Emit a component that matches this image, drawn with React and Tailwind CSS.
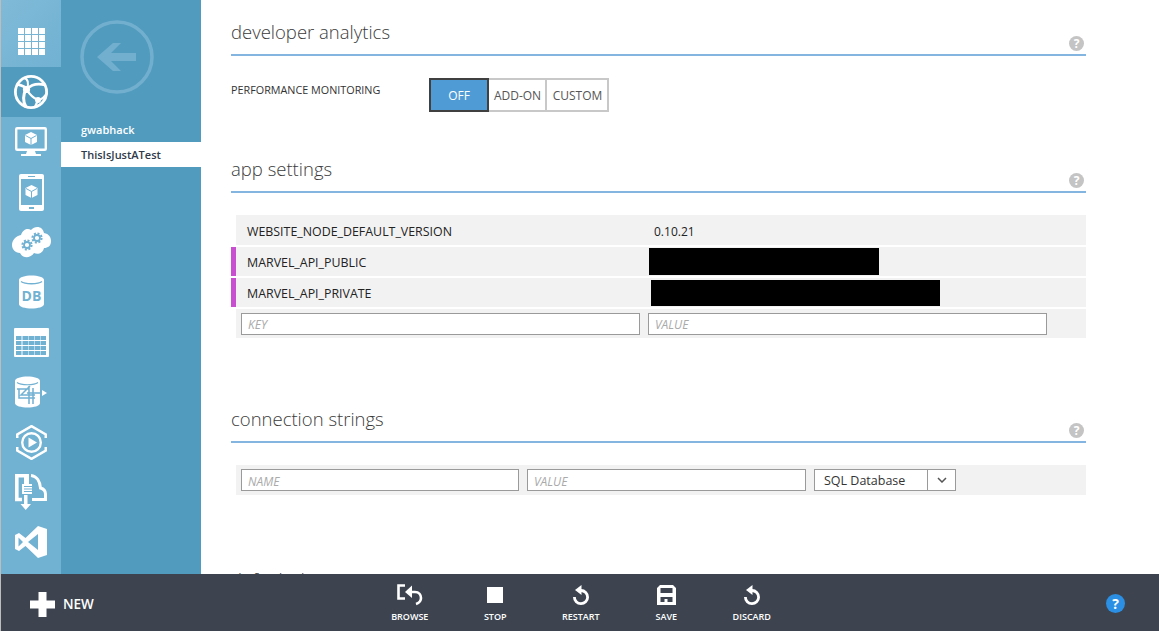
import React from 'react';

const BLUE = '#71b1d2';

const Cube = ({ x, y, s = 1 }) => (
  <g transform={`translate(${x} ${y}) scale(${s})`}>
    <polygon points="6,0 12,3 12,10 6,13 0,10 0,3" fill="#fff" />
    <path d="M0.5 3.5 L6 6.5 L11.5 3.5 M6 6.5 V13" stroke={BLUE} strokeWidth="1" fill="none" />
  </g>
);

const Gear = ({ cx, cy }) => (
  <g fill="none" stroke={BLUE}>
    <circle cx={cx} cy={cy} r="4.6" strokeWidth="2" strokeDasharray="2 1.6" />
    <circle cx={cx} cy={cy} r="3" strokeWidth="1.8" />
  </g>
);

const GridIcon = () => (
  <svg width="27" height="27" viewBox="0 0 27 27" fill="#fff">
    {[0, 7, 14, 21].map(y =>
      [0, 7, 14, 21].map(x => <rect key={`${x}-${y}`} x={x} y={y} width="6" height="6" />)
    )}
  </svg>
);

const GlobeIcon = () => (
  <svg width="36" height="36" viewBox="0 0 36 36" fill="none" stroke="#fff">
    <circle cx="18" cy="18" r="15.6" strokeWidth="2.8" />
    <path d="M4 10 C8 12 11 11 14 15 C18 11 24 9 32 11" strokeWidth="2.8" />
    <path d="M13 15 C10 21 10 28 13 33" strokeWidth="3" />
    <path d="M14 16 C17 21 20 24 25 26 C28 26 31 24 34 19" strokeWidth="2.4" />
    <path d="M25 26 L22 33" strokeWidth="2.2" />
    <path d="M11 4 C15 5 16 9 14 15" strokeWidth="2" />
    <circle cx="13.5" cy="15.5" r="3.6" fill="#fff" stroke="none" />
    <circle cx="25" cy="26" r="3" fill="#fff" stroke="none" />
  </svg>
);

const MonitorIcon = () => (
  <svg width="32" height="30" viewBox="0 0 32 30">
    <rect x="1.2" y="1.2" width="29.6" height="21.6" rx="1" fill="none" stroke="#fff" strokeWidth="2.4" />
    <path d="M12 24 H20 L21 27 H26 V29 H6 V27 H11 Z" fill="#fff" />
    <Cube x="10" y="5" />
  </svg>
);

const PhoneIcon = () => (
  <svg width="25" height="37" viewBox="0 0 25 37">
    <rect width="25" height="37" rx="2" fill="#fff" />
    <rect x="2" y="5" width="21" height="26" fill={BLUE} />
    <rect x="9" y="2" width="7" height="1" fill={BLUE} />
    <rect x="10" y="33" width="5" height="2" fill={BLUE} />
    <Cube x="6.5" y="11" />
  </svg>
);

const CloudIcon = () => (
  <svg width="39" height="32" viewBox="0 0 39 32">
    <path
      d="M9 9 C11 3 16 2 19 4 C23 -1 31 0 32 7 C37 8 39 11 39 15 C39 20 36 22 32 22 C31 27 26 29 22 27 C19 32 11 33 8 27 C3 27 0 23 0 19 C0 14 4 10 9 9 Z"
      fill="#fff"
    />
    <Gear cx="15" cy="19" />
    <Gear cx="25" cy="12" />
  </svg>
);

const DbIcon = () => (
  <svg width="25" height="34" viewBox="0 0 25 34">
    <path d="M0 5 C0 -1 25 -1 25 5 V29 C25 35 0 35 0 29 Z" fill="#fff" />
    <path d="M2 6.5 C6 9.5 19 9.5 23 6.5" stroke={BLUE} strokeWidth="1.4" fill="none" />
    <text x="12.5" y="26" textAnchor="middle" fontSize="14" fontWeight="700" fill={BLUE} fontFamily="'Open Sans', sans-serif">DB</text>
  </svg>
);

const TableIcon = () => (
  <svg width="35" height="29" viewBox="0 0 35 29">
    <rect width="35" height="29" rx="1" fill="#fff" />
    {[8, 13, 18, 23].map(y =>
      [2, 8.5, 14.5, 20.5, 26.5].map(x => <rect key={`${x}-${y}`} x={x} y={y} width="5.5" height="4" fill={BLUE} />)
    )}
  </svg>
);

const SyncIcon = () => (
  <svg width="32" height="32" viewBox="0 0 32 32">
    <path d="M0 5 C0 -1 25 -1 25 5 V27 C25 33 0 33 0 27 Z" fill="#fff" />
    <path d="M2 6.5 C6 9.5 19 9.5 23 6.5" stroke={BLUE} strokeWidth="1.2" fill="none" />
    <path d="M2 13 H14 M4 13 V22 H20 M15 10 L6 19 H20 M14 10 V28 M18 12 V28 M12 17 H29" stroke={BLUE} strokeWidth="1.5" fill="none" />
    <polygon points="27,14 32,17 27,20" fill="#fff" />
  </svg>
);

const MediaIcon = () => (
  <svg width="31" height="35" viewBox="0 0 31 35">
    <path d="M1.2 13 V9.5 L15.5 1.2 L29.8 9.5 V13 M1.2 22 V25.5 L15.5 33.8 L29.8 25.5 V22" fill="none" stroke="#fff" strokeWidth="2.6" />
    <circle cx="15.5" cy="17.5" r="9.3" fill="none" stroke="#fff" strokeWidth="2.4" />
    <polygon points="12.5,12.5 21,17.5 12.5,22.5" fill="#fff" />
  </svg>
);

const DocCloudIcon = () => (
  <svg width="32" height="36" viewBox="0 0 32 36">
    <path d="M13 1.8 H1.8 V25.5 H7" fill="none" stroke="#fff" strokeWidth="3.6" />
    <rect x="9" y="0" width="5" height="10" fill="#fff" />
    <path d="M16 1.5 C22 2 25 8 25.5 14 C29 15 30.5 17 30.5 20 V25.5 H17" fill="none" stroke="#fff" strokeWidth="3" />
    <rect x="7" y="10" width="10" height="10" fill="#fff" />
    <path d="M9 12.5 H17 M9 15 H17 M9 17.5 H17" stroke={BLUE} strokeWidth="1" />
    <path d="M9 21 H12.5 V30 H16 L10.7 36 L5.5 30 H9 Z" fill="#fff" />
  </svg>
);

const VsIcon = () => (
  <svg width="32" height="32" viewBox="0 0 32 32">
    <path
      fillRule="evenodd"
      d="M23 0 L32 3 V29 L23 32 L10.5 20 L4 25 L0 23 V9 L4 7 L10.5 12 Z M3.5 11.5 V20.5 L8 16 Z M13 16 L23 24 V8 Z"
      fill="#fff"
    />
  </svg>
);

const navItems = [MonitorIcon, PhoneIcon, CloudIcon, DbIcon, TableIcon, SyncIcon, MediaIcon, DocCloudIcon, VsIcon];

const HelpDot = () => (
  <span className="w-[15px] h-[15px] rounded-full bg-[#c4c4c4] text-white text-[12px] font-bold leading-[15px] text-center">?</span>
);

const SectionHead = ({ title }) => (
  <div className="flex justify-between items-end h-[35px] border-b-2 border-[#84b5e0] pr-[2px] pb-[3px] relative">
    <h2 className="text-[18.5px] font-light text-[#3b3b3b] leading-[24px] self-start -mt-[1px]">{title}</h2>
    <HelpDot />
  </div>
);

const KeyRow = ({ name, value, redact, flagged, tall }) => (
  <div className={`flex ${tall ? 'h-[30px]' : 'h-[29px]'} mb-[2px] ml-[5px] bg-[#f2f2f2] relative items-center text-[#222]`}>
    {flagged && <span className="absolute -left-[5px] top-0 bottom-0 w-[5px] bg-[#c850d0]" />}
    <span className="pl-[11px] pt-[4px] w-[413px] text-[12.4px]">{name}</span>
    {value && <span className="pl-[5px] pt-[4px] text-[12px]">{value}</span>}
    {redact}
  </div>
);

const TextBox = ({ placeholder, className }) => (
  <input
    placeholder={placeholder}
    className={`h-[22px] border border-[#9a9a9a] bg-white px-[6px] pt-[2px] text-[12px] italic placeholder:text-[#aaaaaa] outline-none ${className}`}
  />
);

const FooterAction = ({ label, children }) => (
  <div className="w-[85.5px] flex flex-col items-center">
    <div className="h-[24px] flex items-center justify-center">{children}</div>
    <span className="text-[9px] font-semibold text-white mt-[4px] leading-[12px]">{label}</span>
  </div>
);

const RotateIcon = () => (
  <svg width="20" height="22" viewBox="0 0 20 22" fill="none">
    <path d="M10 6.5 A6.6 6.6 0 1 1 3.4 13" stroke="#fff" strokeWidth="2.8" />
    <polygon points="10.5,1 10.5,11 4,6" fill="#fff" />
  </svg>
);

export default function App() {
  return (
    <div className="h-screen overflow-hidden flex flex-col bg-white border-l border-[#bdbdbd] font-['Open_Sans',sans-serif]">
      <div className="flex-1 flex min-h-0 overflow-hidden">
        <nav className="w-[60px] shrink-0 bg-[#71b1d2] flex flex-col">
          <div className="h-[67px] flex items-center justify-center pt-[16px] bg-gradient-to-br from-[#80bad8] to-[#71b1d2]">
            <GridIcon />
          </div>
          <div className="h-[50px] bg-[#519bbe] flex items-center justify-center">
            <GlobeIcon />
          </div>
          {navItems.map((Icon, i) => (
            <div key={i} className="h-[50px] shrink-0 flex items-center justify-center">
              <Icon />
            </div>
          ))}
        </nav>

        <aside className="w-[140px] shrink-0 bg-[#519bbe] flex flex-col">
          <div className="h-[117px] pl-[19px] pt-[20px]">
            <svg width="74" height="74" viewBox="0 0 74 74" fill="none">
              <circle cx="37" cy="37" r="35" stroke="#72afcf" strokeWidth="3.5" />
              <path d="M17 37 L33 23 H41 L31 33 H56 V41 H31 L41 51 H33 Z" fill="#72afcf" />
            </svg>
          </div>
          <div className="h-[25px] pl-[20px] pt-[1px] flex items-center text-[11px] font-semibold text-white">gwabhack</div>
          <div className="h-[25px] pl-[20px] pt-[1px] flex items-center text-[11px] font-semibold text-[#2f3a4a] bg-white">ThisIsJustATest</div>
        </aside>

        <main className="flex-1 min-w-0 pl-[30px] pr-[73px] pt-[21px]">
          <SectionHead title="developer analytics" />

          <div className="flex mt-[22px] h-[34px]">
            <span className="w-[198px] pt-[4px] text-[10.8px] font-medium text-[#333] leading-[16px]">PERFORMANCE MONITORING</span>
            <div className="flex text-[12px] text-[#555]">
              <span className="w-[60px] pt-[1px] border-2 border-[#404040] bg-[#4e9bd6] text-white flex items-center justify-center">OFF</span>
              <span className="w-[58px] pt-[1px] pl-[1px] border-2 border-l-0 border-[#c8c8c8] flex items-center justify-center">ADD-ON</span>
              <span className="w-[62px] pt-[1px] pl-[1px] border-2 border-l-0 border-[#c8c8c8] flex items-center justify-center">CUSTOM</span>
            </div>
          </div>

          <div className="mt-[46px]">
            <SectionHead title="app settings" />
          </div>

          <div className="mt-[22px]">
            <KeyRow name="WEBSITE_NODE_DEFAULT_VERSION" value="0.10.21" tall />
            <KeyRow name="MARVEL_API_PUBLIC" flagged redact={<span className="w-[230px] h-[27px] bg-black" />} />
            <KeyRow name="MARVEL_API_PRIVATE" flagged redact={<span className="ml-[2px] w-[289px] h-[26px] bg-black" />} />
            <div className="ml-[5px] h-[29px] bg-[#f2f2f2] flex items-center gap-[8px] pl-[5px]">
              <TextBox placeholder="KEY" className="w-[399px]" />
              <TextBox placeholder="VALUE" className="w-[399px]" />
            </div>
          </div>

          <div className="mt-[70px]">
            <SectionHead title="connection strings" />
          </div>

          <div className="mt-[22px] ml-[5px] h-[30px] bg-[#f2f2f2] flex items-center gap-[8px] pl-[5px]">
            <TextBox placeholder="NAME" className="w-[278px]" />
            <TextBox placeholder="VALUE" className="w-[279px]" />
            <div className="w-[142px] h-[22px] border border-[#9a9a9a] bg-white flex items-center text-[12.5px] text-[#333]">
              <span className="w-[113px] pl-[9px] pt-[1px] border-r border-[#9a9a9a] leading-[20px]">SQL Database</span>
              <svg className="ml-[9px]" width="10" height="6" viewBox="0 0 10 6" fill="none">
                <path d="M1 1 L5 5 L9 1" stroke="#555" strokeWidth="1.5" />
              </svg>
            </div>
          </div>

          <div className="mt-[74px]">
            <SectionHead title="default documents" />
          </div>
        </main>
      </div>

      <footer className="h-[57px] shrink-0 bg-[#3d4450] flex items-start">
        <div className="w-[366px] pl-[29px] pt-[18px] flex items-center gap-[8px]">
          <svg width="25" height="25" viewBox="0 0 25 25" fill="#fff">
            <path d="M8.5 0 H16.5 V8.5 H25 V16.5 H16.5 V25 H8.5 V16.5 H0 V8.5 H8.5 Z" />
          </svg>
          <span className="text-[13.5px] font-semibold text-white">NEW</span>
        </div>
        <div className="flex pt-[9px]">
          <FooterAction label="BROWSE">
            <svg width="26" height="22" viewBox="0 0 26 22" fill="none">
              <path d="M8 1.5 H1.5 V14.5 H8" stroke="#fff" strokeWidth="2.6" />
              <path d="M13 8 H18 C22 8 24 11 24 14 C24 17 22 19 19 20" stroke="#fff" strokeWidth="2.6" />
              <polygon points="15,1.5 15,14 8,8" fill="#fff" />
            </svg>
          </FooterAction>
          <FooterAction label="STOP">
            <span className="w-[16px] h-[16px] bg-white" />
          </FooterAction>
          <FooterAction label="RESTART">
            <RotateIcon />
          </FooterAction>
          <FooterAction label="SAVE">
            <svg width="19" height="20" viewBox="0 0 19 20">
              <path
                fillRule="evenodd"
                d="M3 0 H16 L19 3 V20 H0 V3 Z M3.5 3 V8 H15.5 V3 Z M3.5 12 V17 H7.5 V14 H10.5 V17 H15.5 V12 Z"
                fill="#fff"
              />
            </svg>
          </FooterAction>
          <FooterAction label="DISCARD">
            <RotateIcon />
          </FooterAction>
        </div>
        <div className="ml-auto mr-[34px] mt-[20px] w-[19px] h-[19px] rounded-full bg-[#2b8fe3] text-white text-[14px] font-bold leading-[19px] text-center">?</div>
      </footer>
    </div>
  );
}
